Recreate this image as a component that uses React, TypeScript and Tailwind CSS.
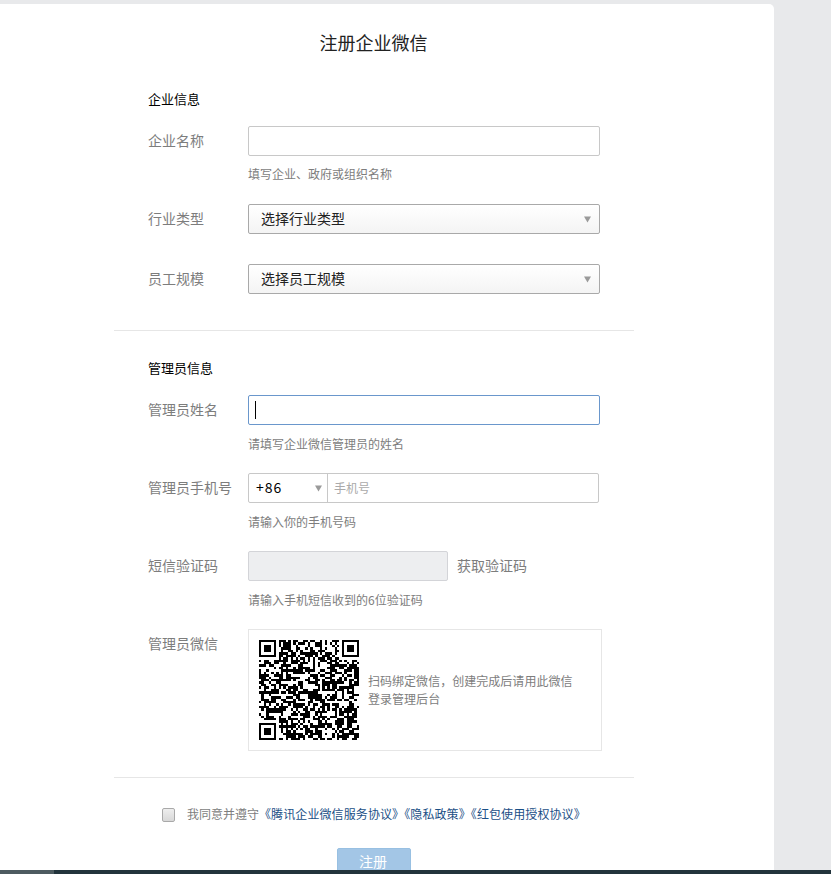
import type { ReactNode } from "react";

// fake QR matrix: 41 modules, finder patterns plus hashed noise
const SIZE = 41;
function buildQr() {
  const cells: [number, number][] = [];
  const inFinder = (x: number, y: number) =>
    (x < 8 && y < 8) || (x > SIZE - 9 && y < 8) || (x < 8 && y > SIZE - 9);
  for (let y = 0; y < SIZE; y++) {
    for (let x = 0; x < SIZE; x++) {
      if (inFinder(x, y)) continue;
      let h = Math.imul(x * 73856093 ^ (y * 19349663) ^ 83492791, 0x5bd1e995);
      h ^= h >>> 15;
      h = Math.imul(h, 0x2c1b3c6d);
      h ^= h >>> 13;
      if ((h >>> 0) % 100 < 55) cells.push([x, y]);
    }
  }
  return cells;
}
const qrCells = buildQr();

function Finder({ x, y }: { x: number; y: number }) {
  return (
    <g>
      <rect x={x} y={y} width="7" height="7" fill="#000" />
      <rect x={x + 1} y={y + 1} width="5" height="5" fill="#fff" />
      <rect x={x + 2} y={y + 2} width="3" height="3" fill="#000" />
    </g>
  );
}

function Arrow() {
  return (
    <svg width="7" height="7" viewBox="0 0 7 7" className="shrink-0">
      <polygon points="0,0.5 7,0.5 3.5,6.5" fill="#9a9a9a" />
    </svg>
  );
}

function Label({ children }: { children: ReactNode }) {
  return <div className="w-[100px] shrink-0 text-[14px] leading-[28px] text-[#7d7d7d]">{children}</div>;
}

function Hint({ className, children }: { className: string; children: ReactNode }) {
  return <div className={`ml-[100px] h-[18px] text-[12px] leading-[18px] text-[#7d7d7d] ${className}`}>{children}</div>;
}

function SelectBox({ text }: { text: string }) {
  return (
    <div className="flex h-[30px] w-[352px] items-center justify-between rounded-[2px] border border-[#a9a9a9] bg-gradient-to-b from-white to-[#f4f4f4] pl-[12px] pr-[8px] text-[14px] text-[#222]">
      <span className="-mt-[2px]">{text}</span>
      <Arrow />
    </div>
  );
}

function Heading({ className, children }: { className: string; children: ReactNode }) {
  return <div className={`h-[20px] text-[13px] leading-[20px] text-black ${className}`}>{children}</div>;
}

export default function App() {
  return (
    <div
      className="relative h-[874px] w-[831px] overflow-hidden bg-[#e8e9eb] pt-1"
      style={{ fontFamily: '"Noto Sans CJK SC", "Noto Sans", sans-serif' }}
    >
      <div className="h-[900px] w-[774px] rounded-tr-[5px] bg-white pt-[26px]">
        <h1 className="h-[24px] w-[747px] text-center text-[18px] leading-[24px] text-[#222]">注册企业微信</h1>

        <div className="ml-[148px] w-[460px]">
          <Heading className="mt-[35px]">企业信息</Heading>
          <div className="mt-[17px] flex">
            <Label>企业名称</Label>
            <div className="h-[30px] w-[352px] rounded-[2px] border border-[#c8c8c8] bg-white" />
          </div>
          <Hint className="mt-[9px]">填写企业、政府或组织名称</Hint>
          <div className="mt-[21px] flex">
            <Label>行业类型</Label>
            <SelectBox text="选择行业类型" />
          </div>
          <div className="mt-[30px] flex">
            <Label>员工规模</Label>
            <SelectBox text="选择员工规模" />
          </div>
        </div>

        <div className="ml-[114px] mt-[36px] h-px w-[520px] bg-[#e6e6e6]" />

        <div className="ml-[148px] w-[460px]">
          <Heading className="mt-[27px]">管理员信息</Heading>
          <div className="mt-[17px] flex">
            <Label>管理员姓名</Label>
            <div className="flex h-[30px] w-[352px] items-center rounded-[2px] border border-[#6a97cc] bg-white pl-[6px]">
              <div className="h-[18px] w-px bg-black" />
            </div>
          </div>
          <Hint className="mt-[10px]">请填写企业微信管理员的姓名</Hint>
          <div className="mt-[20px] flex">
            <Label>管理员手机号</Label>
            <div className="flex h-[30px] w-[351px] rounded-[2px] border border-[#c8c8c8] bg-white">
              <div className="flex w-[79px] items-center justify-between border-r border-[#c8c8c8] pl-[7px] pr-[5px] text-[14px] tracking-[1px] text-black">
                <span className="-mt-[2px]">+86</span>
                <Arrow />
              </div>
              <div className="flex flex-1 items-center pl-[6px] text-[12px] text-[#aaaaaa]">手机号</div>
            </div>
          </div>
          <Hint className="mt-[10px]">请输入你的手机号码</Hint>
          <div className="mt-[20px] flex">
            <Label>短信验证码</Label>
            <div className="h-[30px] w-[200px] rounded-[2px] border border-[#d3d4d8] bg-[#edeef0]" />
            <span className="ml-[9px] text-[14px] leading-[28px] text-[#7d7d7d]">获取验证码</span>
          </div>
          <Hint className="mt-[10px]">请输入手机短信收到的6位验证码</Hint>
          <div className="mt-[20px] flex">
            <Label>管理员微信</Label>
            <div className="flex h-[122px] w-[354px] items-center border border-[#e6e6e6] pl-[10px]">
              <svg
                width="100"
                height="100"
                viewBox={`0 0 ${SIZE} ${SIZE}`}
                shapeRendering="crispEdges"
                className="shrink-0"
              >
                {qrCells.map(([x, y]) => (
                  <rect key={`${x}-${y}`} x={x} y={y} width="1" height="1" fill="#000" />
                ))}
                <Finder x={0} y={0} />
                <Finder x={SIZE - 7} y={0} />
                <Finder x={0} y={SIZE - 7} />
              </svg>
              <p className="ml-[9px] w-[210px] text-[12px] leading-[18px] tracking-[0.03px] text-[#7d7d7d]">
                扫码绑定微信，创建完成后请用此微信登录管理后台
              </p>
            </div>
          </div>
        </div>

        <div className="ml-[114px] mt-[26px] h-px w-[520px] bg-[#e6e6e6]" />

        <div className="ml-[162px] mt-[27px] flex h-[18px] items-center text-[12px] text-[#7d7d7d]">
          <div className="mt-[1px] h-[14px] w-[13px] rounded-[2px] border border-[#a9a9a9] bg-gradient-to-b from-[#eeeeee] to-[#d8d8d8]" />
          <span className="ml-[12px]">我同意并遵守</span>
          <span className="tracking-[0.1px] text-[#1b4f86]">《腾讯企业微信服务协议》《隐私政策》《红包使用授权协议》</span>
        </div>

        <div className="ml-[337px] mt-[25px] flex h-[40px] w-[74px] justify-center rounded-[2px] border border-[#98c0e2] bg-[#a3c6e6] pr-[2px] pt-[1px] text-[14px] leading-[22px] text-white">
          注册
        </div>
      </div>

      {/* taskbar edge over the page bottom */}
      <div className="absolute bottom-0 left-0 flex h-[4px] w-full">
        <div className="w-[54px] bg-[#4d5b60]" />
        <div className="flex-1 bg-[#22343c]" />
      </div>
    </div>
  );
}
